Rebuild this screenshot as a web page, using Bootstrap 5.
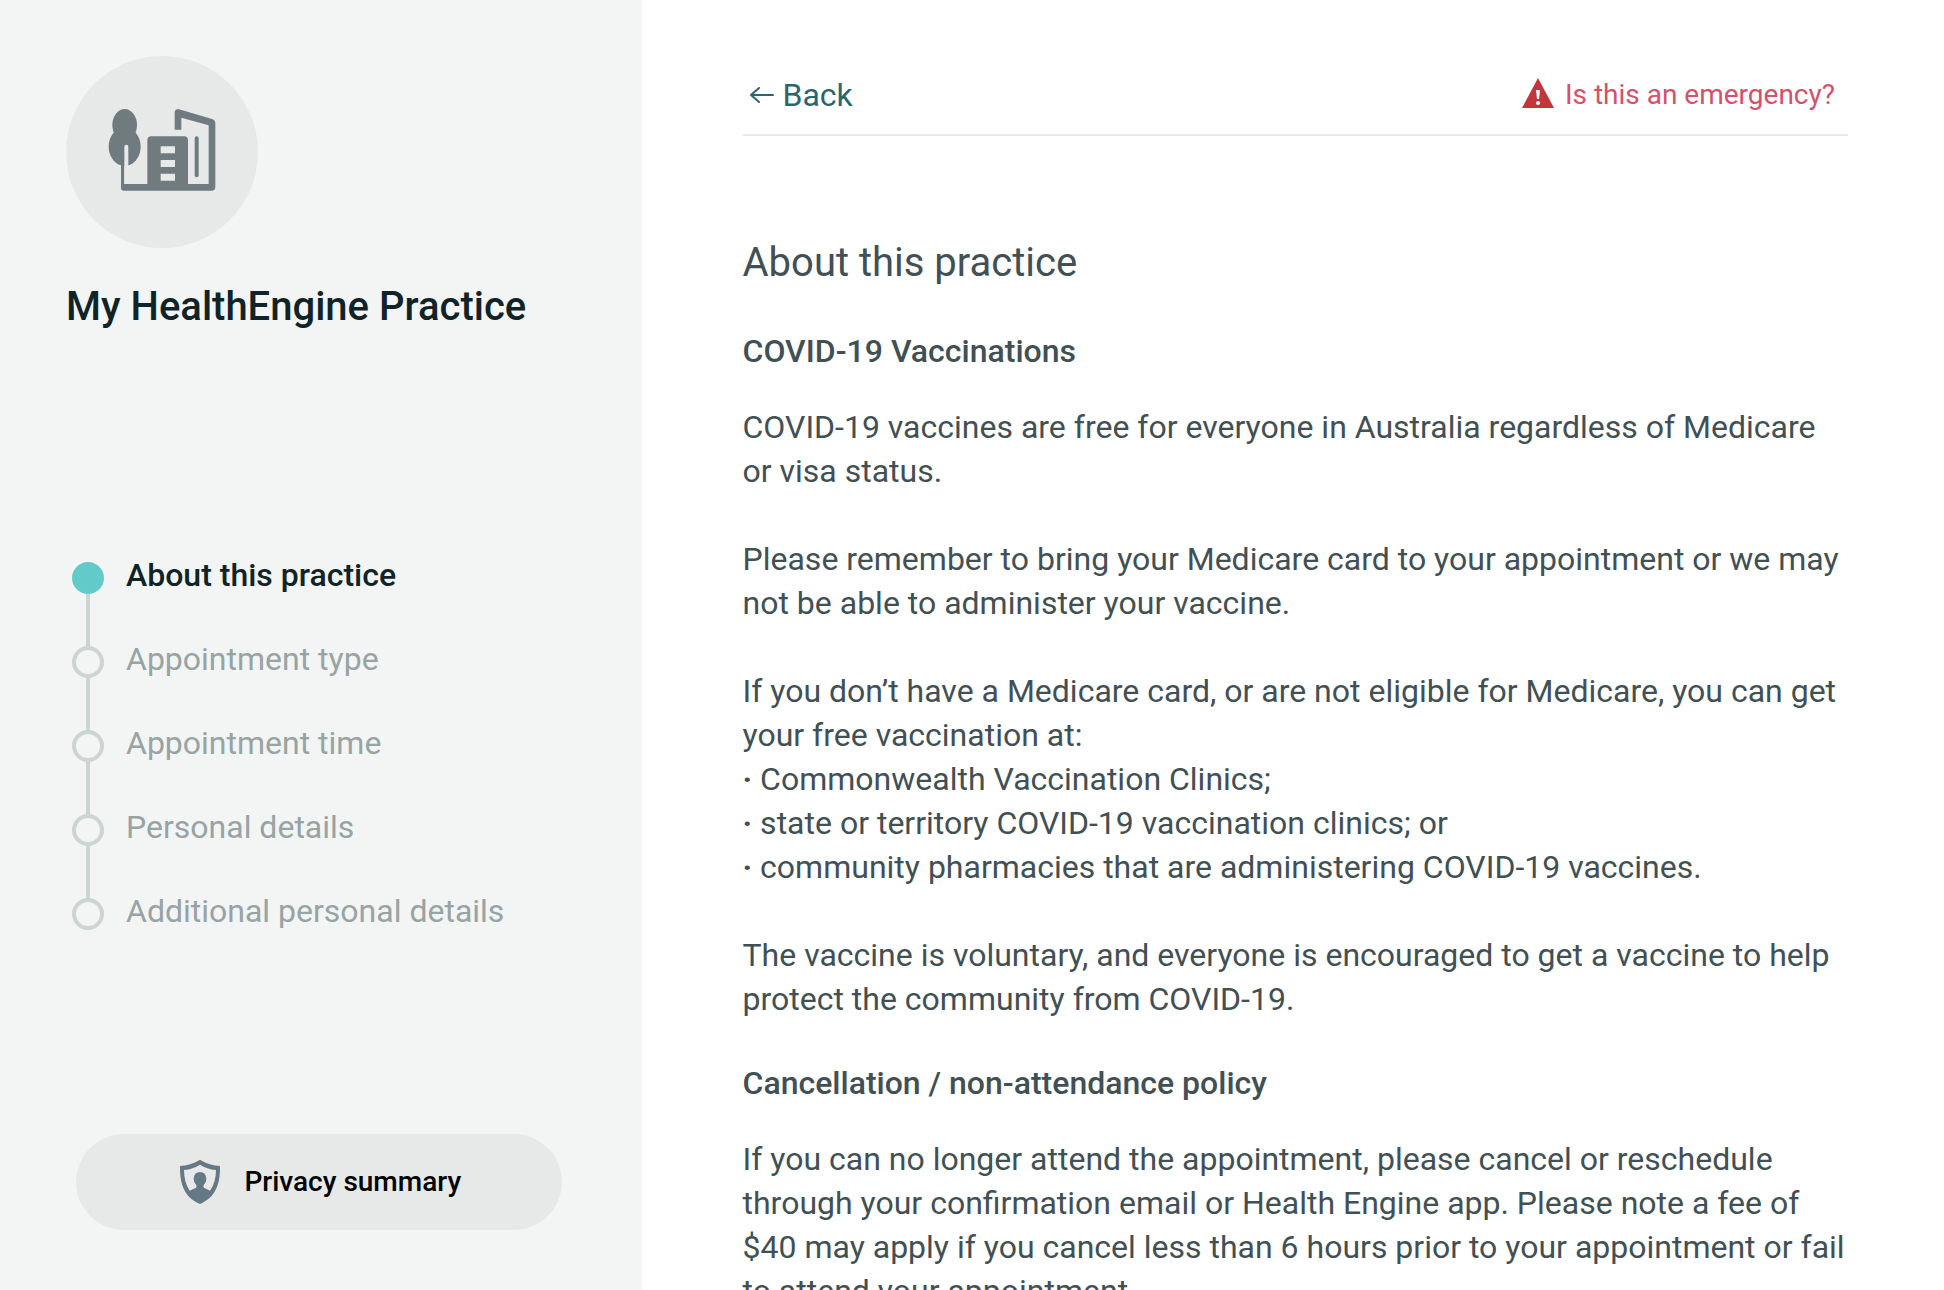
<!DOCTYPE html>
<html lang="en">
<head>
<meta charset="utf-8">
<meta name="viewport" content="width=device-width, initial-scale=1">
<title>My HealthEngine Practice</title>
<link href="https://cdn.jsdelivr.net/npm/bootstrap@5.3.0/dist/css/bootstrap.min.css" rel="stylesheet">
<style>
  body { font-family: Roboto, "Liberation Sans", sans-serif; font-size: 32px; line-height: 44px; color: #415054; }
  .side-panel { flex: 0 0 33%; background: #f3f5f4; padding: 56px 70px 60px 66px; }
  .practice-logo { width: 192px; height: 192px; }
  .practice-name { font-size: 40px; line-height: 56px; font-weight: 500; color: #102428; margin: 31px 0 0; }
  .step-list { padding-top: 16px; }
  .step-item { position: relative; padding: 0 0 40px 60px; }
  .step-item:last-child { padding-bottom: 0; }
  .step-item a { color: #98a3a4; text-decoration: none; }
  .step-item.current a { color: #102428; font-weight: 500; }
  /* dot and connector sit over the item's left padding */
  .step-item::before { content: ""; position: absolute; left: 6px; top: 9px; width: 32px; height: 32px; border: 4px solid #cdd4d4; border-radius: 50%; }
  .step-item.current::before { background: #62cbca; border-color: #62cbca; }
  .step-item:not(:last-child)::after { content: ""; position: absolute; left: 20px; top: 41px; width: 4px; height: 52px; background: #cdd4d4; }
  .privacy-btn { height: 96px; margin: 0 10px; padding: 0 12px 0 16px; gap: 24px; background: #e7e9e8; color: #000; font-size: 28px; font-weight: 500; }
  .privacy-btn:hover { background: #dde0df; }
  .main-panel { padding: 73px 96px 0 101px; scrollbar-width: none; }
  .main-panel::-webkit-scrollbar { display: none; }
  .top-bar { padding: 0 13px 17px 7px; border-bottom: 2px solid #e7e9e8; }
  .back-link { gap: 9px; color: #2b666c; }
  .emergency-link { gap: 11px; font-size: 28px; color: #d6506c; }
  h2 { font-size: 40px; line-height: 55px; font-weight: 400; margin: 99px 0 39px; }
  h3 { font-size: 32px; line-height: 44px; font-weight: 500; margin: 0 0 32px; }
  .policy-text { margin-bottom: 40px; }
  .policy-text > * { margin: 0 0 44px; }
  .policy-text > .intro-line, .policy-text > :last-child { margin-bottom: 0; }
</style>
</head>
<body>
<div class="d-flex vh-100 overflow-hidden">
  <aside class="side-panel d-flex flex-column">
    <svg class="practice-logo" viewBox="48 48 576 576" role="img" aria-label="Practice logo">
      <circle cx="336" cy="336" r="288" fill="#e7e9e8"/>
      <g fill="#6f7b7e">
        <ellipse cx="224" cy="255" rx="37" ry="48"/>
        <ellipse cx="224" cy="320" rx="48" ry="58"/>
        <path d="M213 360h10v72h69V301q0-12 12-12h98q12 0 12 12v131h62V256l-82-23v36h-20v-51q0-13 13-10l99 29q10 3 10 12v191q0 12-12 12H222q-9 0-9-9z"/>
        <rect x="434" y="289" width="12" height="123" rx="6"/>
      </g>
      <path fill="#e7e9e8" d="M223 432V320q0-6 6-6t6 6v112zM332 319h43v21h-43zM332 360h43v21h-43zM332 401h43v21h-43z"/>
    </svg>
    <h1 class="practice-name">My HealthEngine Practice</h1>
    <ol class="step-list list-unstyled my-auto">
      <li class="step-item current"><a href="#about" aria-current="step">About this practice</a></li>
      <li class="step-item"><a href="#type">Appointment type</a></li>
      <li class="step-item"><a href="#time">Appointment time</a></li>
      <li class="step-item"><a href="#personal">Personal details</a></li>
      <li class="step-item"><a href="#additional">Additional personal details</a></li>
    </ol>
    <button type="button" class="privacy-btn btn rounded-pill border-0 d-flex align-items-center justify-content-center">
      <svg width="40" height="44" viewBox="360 120 120 132" aria-hidden="true">
        <path fill="#647984" fill-rule="evenodd" d="M420 119C402 131 382 137 360 138C359 190 372 232 420 252C468 232 481 190 480 138C458 137 438 131 420 119ZM420 134C406 143 390 148 372 150C372 174 378 195 389 212L408 203Q411 200 409 196Q401 188 401 177Q402 156 420 156Q438 156 439 177Q439 188 431 196Q429 200 432 203L450 212C462 195 468 174 468 150C450 148 434 143 420 134Z"/>
      </svg>
      <span>Privacy summary</span>
    </button>
  </aside>
  <main class="main-panel flex-grow-1 overflow-auto">
    <header class="top-bar d-flex justify-content-between align-items-start">
      <a href="#back" class="back-link d-flex align-items-center text-decoration-none">
        <svg width="24" height="18" viewBox="0 0 24 18" fill="none" stroke="currentColor" stroke-width="2" stroke-linecap="round" stroke-linejoin="round" aria-hidden="true"><path d="M23 9H1M9 2L1 9l8 7"/></svg>
        <span>Back</span>
      </a>
      <a href="#emergency" class="emergency-link d-flex align-items-center text-decoration-none">
        <svg width="32" height="34" viewBox="0 0 32 34" aria-hidden="true"><path fill="#c23538" d="M16 0l16 30H0z"/><path fill="#fff" d="M14 12h4l-1 9h-2z"/><circle cx="16" cy="25" r="2" fill="#fff"/></svg>
        <span>Is this an emergency?</span>
      </a>
    </header>
    <h2 id="about">About this practice</h2>
    <h3>COVID-19 Vaccinations</h3>
    <div class="policy-text">
      <p>COVID-19 vaccines are free for everyone in Australia regardless of Medicare or visa status.</p>
      <p>Please remember to bring your Medicare card to your appointment or we may not be able to administer your vaccine.</p>
      <p class="intro-line">If you don’t have a Medicare card, or are not eligible for Medicare, you can get your free vaccination at:</p>
      <ul class="list-unstyled">
        <li><b>·</b> Commonwealth Vaccination Clinics;</li>
        <li><b>·</b> state or territory COVID-19 vaccination clinics; or</li>
        <li><b>·</b> community pharmacies that are administering COVID-19 vaccines.</li>
      </ul>
      <p>The vaccine is voluntary, and everyone is encouraged to get a vaccine to help protect the community from COVID-19.</p>
    </div>
    <h3>Cancellation / non-attendance policy</h3>
    <div class="policy-text">
      <p>If you can no longer attend the appointment, please cancel or reschedule through your confirmation email or Health Engine app. Please note a fee of $40 may apply if you cancel less than 6 hours prior to your appointment or fail to attend your appointment.</p>
    </div>
  </main>
</div>
<script src="https://cdn.jsdelivr.net/npm/bootstrap@5.3.0/dist/js/bootstrap.bundle.min.js"></script>
</body>
</html>
